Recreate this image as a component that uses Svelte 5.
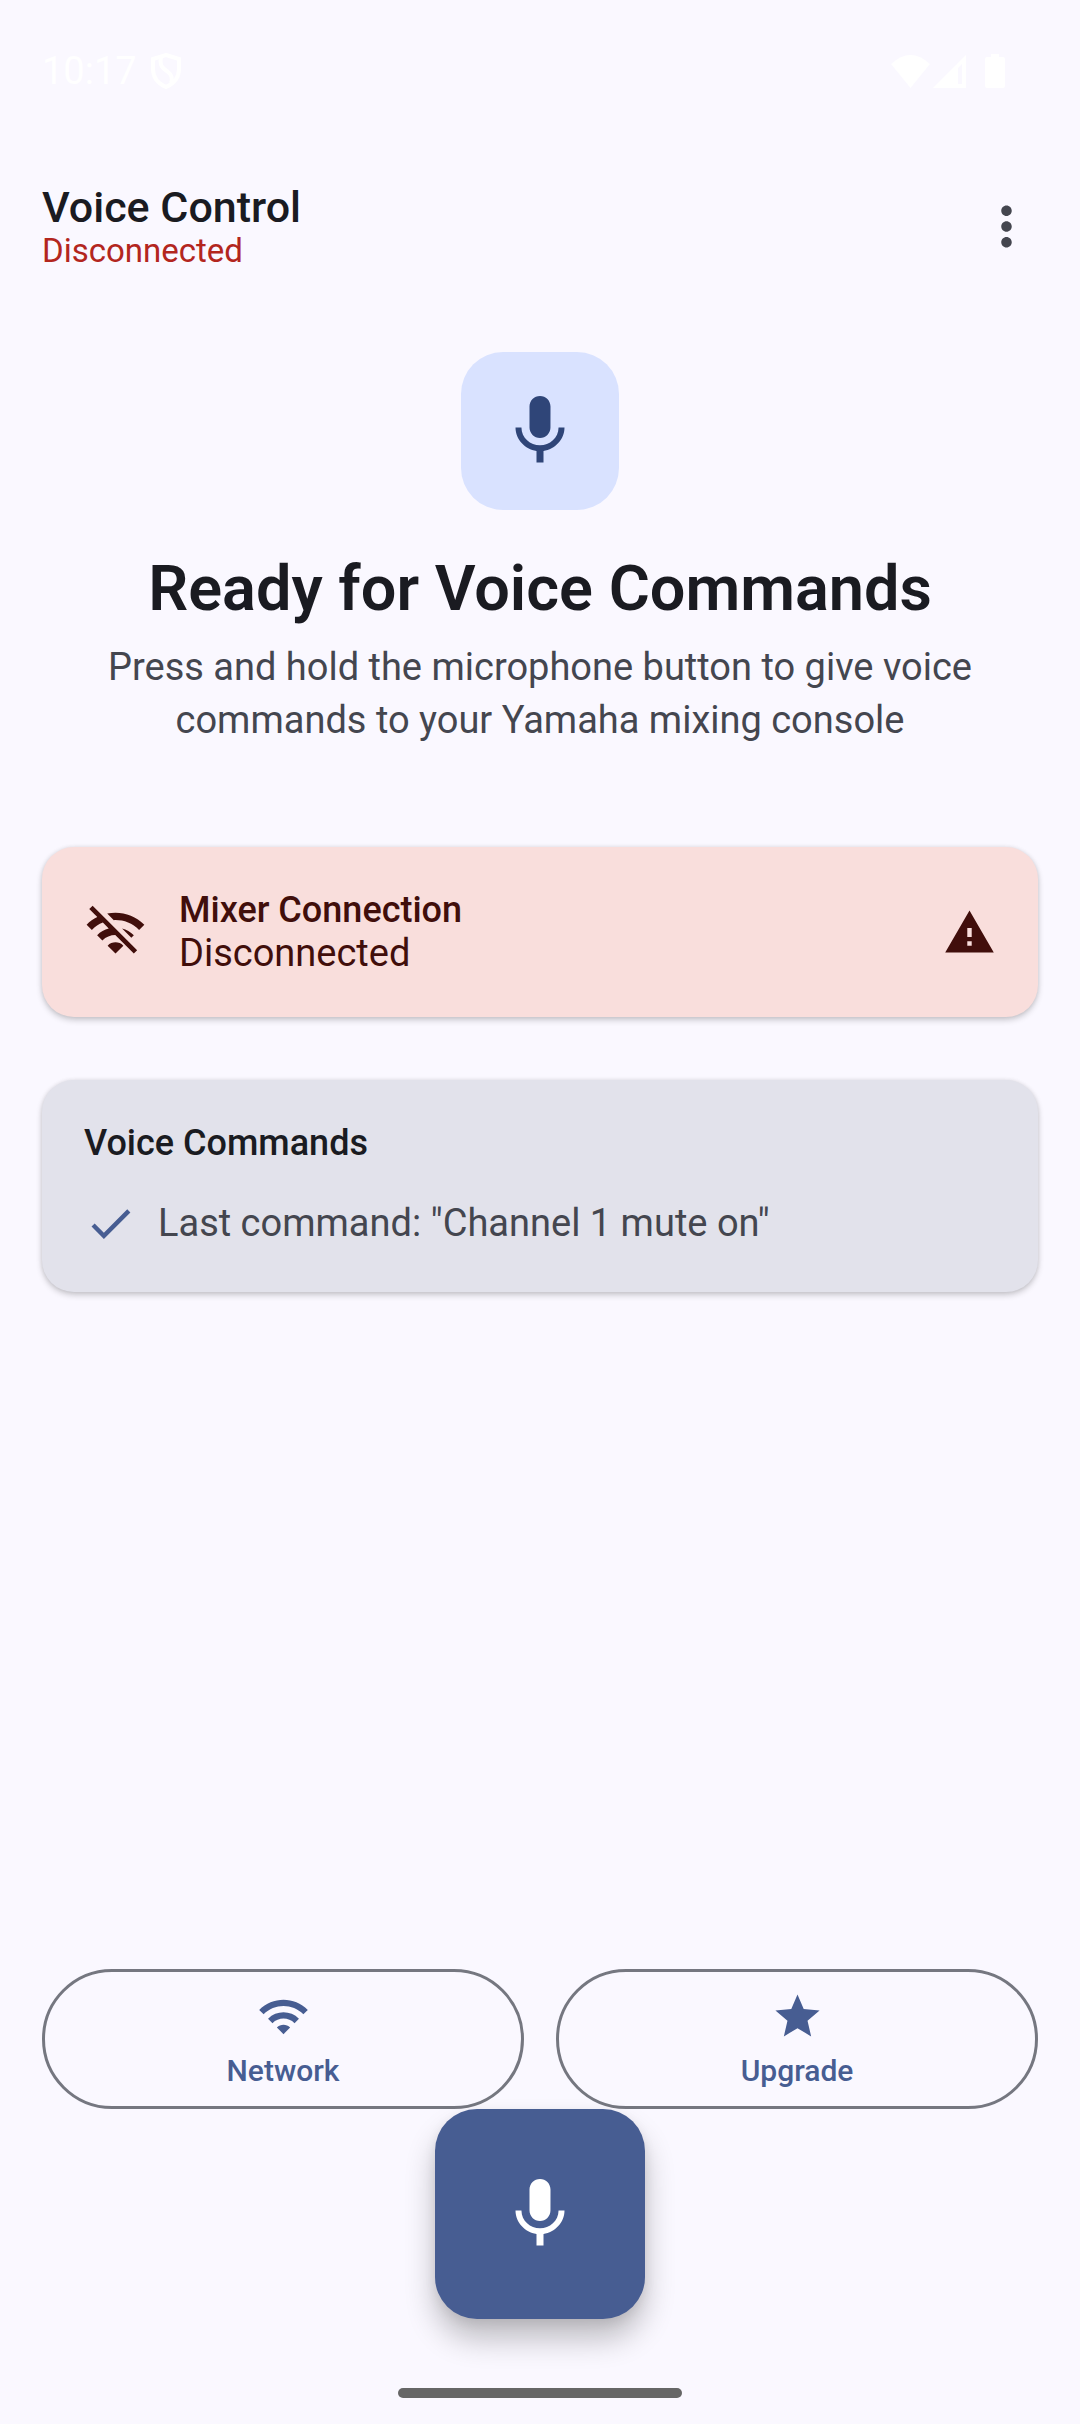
<script>
  const icons = {
    mic: 'M12 14c1.66 0 2.99-1.34 2.99-3L15 5c0-1.66-1.34-3-3-3S9 3.34 9 5v6c0 1.66 1.34 3 3 3zm5.3-3c0 3-2.54 5.1-5.3 5.1S6.7 14 6.7 11H5c0 3.41 2.72 6.23 6 6.72V21h2v-3.28c3.28-.48 6-3.3 6-6.72h-1.7z',
    more: 'M12 8c1.1 0 2-.9 2-2s-.9-2-2-2-2 .9-2 2 .9 2 2 2zm0 2c-1.1 0-2 .9-2 2s.9 2 2 2 2-.9 2-2-.9-2-2-2zm0 6c-1.1 0-2 .9-2 2s.9 2 2 2 2-.9 2-2-.9-2-2-2z',
    wifiOff:
      'M22.99 9C19.15 5.16 13.8 3.76 8.84 4.78l2.52 2.52c3.47-.17 6.99 1.05 9.63 3.7l2-2zm-4 4c-1.29-1.29-2.84-2.13-4.49-2.56l3.53 3.53.96-.97zM2 3.05L5.07 6.1C3.6 6.82 2.22 7.78 1 9l1.99 2c1.24-1.24 2.67-2.16 4.2-2.77l2.24 2.24C7.81 10.89 6.27 11.73 5 13v.01L6.99 15c1.36-1.36 3.14-2.04 4.92-2.06L18.98 20l1.27-1.26L3.29 1.79 2 3.05zM9 17l3 3 3-3c-1.65-1.66-4.34-1.66-6 0z',
    warning: 'M1 21h22L12 2 1 21zm12-3h-2v-2h2v2zm0-4h-2v-4h2v4z',
    check: 'M9 16.17L4.83 12l-1.42 1.41L9 19 21 7l-1.41-1.41z',
    wifi: 'M1 9l2 2c4.97-4.97 13.03-4.97 18 0l2-2C16.93 2.93 7.08 2.93 1 9zm8 8l3 3 3-3c-1.65-1.66-4.34-1.66-6 0zm-4-4l2 2c2.76-2.76 7.24-2.76 10 0l2-2C15.14 9.14 8.87 9.14 5 13z',
    star: 'M12 17.27L18.18 21l-1.64-7.03L22 9.24l-7.19-.61L12 2 9.19 8.63 2 9.24l5.46 4.73L5.82 21z',
  };

  const actions = [
    { label: 'Network', icon: icons.wifi },
    { label: 'Upgrade', icon: icons.star },
  ];

  let connection = $state('Disconnected');
  let lastCommand = $state('Channel 1 mute on');
</script>

{#snippet icon(path, size)}
  <svg class="icon {size}" viewBox="0 0 24 24" aria-hidden="true"><path d={path} /></svg>
{/snippet}

<div class="screen">
  <div class="status-bar">
    <div class="status-group">
      <time>10:17</time>
      <svg class="shield" viewBox="0 0 30 36" aria-hidden="true">
        <path d="M15 2 28 6V16C28 25 22 31 15 34C8 31 2 25 2 16V6Z" />
        <path d="M10 4C8 14 13 16 17 19C21 22 22 25 20 30" />
      </svg>
    </div>
    <div class="status-group right">
      <svg class="signal-wifi" viewBox="0 0 39 33" aria-hidden="true">
        <path d="M0 9Q19.500-9 39 9L19.500 33Z" />
      </svg>
      <svg class="signal-cell" viewBox="0 0 33 33" aria-hidden="true">
        <path fill-rule="evenodd" d="M0 33 33 0V33ZM25 13V29H29V9Z" />
      </svg>
      <svg class="battery" viewBox="0 0 20 34" aria-hidden="true">
        <path d="M6 0H14V3H18Q20 3 20 5V32Q20 34 18 34H2Q0 34 0 32V5Q0 3 2 3H6Z" />
      </svg>
    </div>
  </div>

  <header class="app-bar">
    <div>
      <h1>Voice Control</h1>
      <p class="app-state">{connection}</p>
    </div>
    <button class="menu" type="button" aria-label="More options">
      {@render icon(icons.more, 'medium')}
    </button>
  </header>

  <main>
    <section class="hero">
      <div class="hero-icon">{@render icon(icons.mic, 'large')}</div>
      <h2>Ready for Voice Commands</h2>
      <p>Press and hold the microphone button to give voice commands to your Yamaha mixing console</p>
    </section>

    <section class="card error">
      {@render icon(icons.wifiOff, 'medium')}
      <div class="card-text">
        <h3>Mixer Connection</h3>
        <p>{connection}</p>
      </div>
      {@render icon(icons.warning, 'small')}
    </section>

    <section class="card commands">
      <h3>Voice Commands</h3>
      <div class="last">
        {@render icon(icons.check, 'small')}
        <p>Last command: "{lastCommand}"</p>
      </div>
    </section>
  </main>

  <footer>
    <div class="actions">
      {#each actions as action}
        <button class="outlined" type="button">
          {@render icon(action.icon, 'small')}
          <span>{action.label}</span>
        </button>
      {/each}
    </div>
    <button class="fab" type="button" aria-label="Hold to speak">
      {@render icon(icons.mic, 'large')}
    </button>
    <div class="nav-handle"></div>
  </footer>
</div>

<style>
  :global(body) {
    background: #faf8ff;
  }

  .screen {
    display: flex;
    flex-direction: column;
    min-height: 100vh;
    box-sizing: border-box;
    background: #faf8ff;
    color: #1a1b21;
    font-family: Roboto, sans-serif;
    font-size: 38px;
    line-height: 43px;
  }

  h1,
  h2,
  h3,
  p {
    margin: 0;
  }

  h1,
  h3 {
    font-weight: 500;
  }

  h3 {
    font-size: 36px;
  }

  button {
    margin: 0;
    font-family: inherit;
    cursor: pointer;
  }

  .icon {
    display: block;
    flex: none;
    fill: currentColor;
  }

  .small {
    width: 53px;
    height: 53px;
  }

  .medium {
    width: 63px;
    height: 63px;
  }

  .large {
    width: 84px;
    height: 84px;
  }

  .status-bar {
    display: flex;
    align-items: center;
    justify-content: space-between;
    height: 142px;
    padding: 0 75px 0 42px;
    box-sizing: border-box;
    color: #fff;
  }

  .status-group {
    display: flex;
    align-items: center;
    gap: 14px;
  }

  .right {
    gap: 3px;
  }

  .status-group svg {
    fill: currentColor;
  }

  .status-group .shield {
    width: 30px;
    height: 36px;
    fill: none;
    stroke: currentColor;
    stroke-width: 4;
  }

  .signal-wifi {
    width: 39px;
    height: 33px;
  }

  .signal-cell {
    width: 33px;
    height: 33px;
  }

  .battery {
    width: 20px;
    height: 34px;
    margin-left: 16px;
  }

  .app-bar {
    display: flex;
    align-items: center;
    justify-content: space-between;
    height: 168px;
    padding: 0 11px 0 42px;
  }

  h1 {
    font-size: 43px;
    line-height: 49px;
  }

  .app-state {
    color: #b3261e;
    font-size: 33px;
    line-height: 37px;
  }

  .menu {
    display: grid;
    place-items: center;
    width: 126px;
    height: 126px;
    padding: 0;
    border: 0;
    border-radius: 50%;
    background: none;
    color: #44464f;
  }

  main {
    display: flex;
    flex: 1;
    flex-direction: column;
    padding: 42px 42px 0;
  }

  .hero {
    display: flex;
    flex-direction: column;
    align-items: center;
    padding: 0 21px;
    margin-bottom: 100px;
    text-align: center;
  }

  .hero-icon {
    display: grid;
    place-items: center;
    width: 158px;
    height: 158px;
    border-radius: 42px;
    background: #d9e2ff;
    color: #2f4578;
  }

  h2 {
    margin: 42px 0 15px;
    font-size: 63px;
    font-weight: 600;
    line-height: 74px;
  }

  .hero p {
    color: #44464f;
    line-height: 53px;
  }

  .card {
    padding: 42px;
    border-radius: 32px;
    box-shadow:
      0 3px 6px rgb(0 0 0 / 20%),
      0 0 4px rgb(0 0 0 / 8%);
  }

  .error {
    display: flex;
    align-items: center;
    margin-bottom: 63px;
    background: #f9dedc;
    color: #410e0b;
  }

  .card-text {
    flex: 1;
    padding: 0 32px;
  }

  .commands {
    background: #e2e2eb;
  }

  .last {
    display: flex;
    align-items: center;
    gap: 21px;
    margin-top: 32px;
    color: #44464f;
  }

  .last .icon {
    color: #475d92;
  }

  footer {
    display: flex;
    flex-direction: column;
    align-items: center;
    padding: 0 42px 26px;
  }

  .actions {
    display: flex;
    gap: 32px;
    width: 100%;
  }

  .outlined {
    display: flex;
    flex: 1;
    flex-direction: column;
    align-items: center;
    gap: 11px;
    padding: 18px;
    border: 3px solid #757780;
    border-radius: 70px;
    background: none;
    color: #475d92;
    font-size: 30px;
    font-weight: 500;
    line-height: 34px;
  }

  .fab {
    display: grid;
    place-items: center;
    width: 210px;
    height: 210px;
    padding: 0;
    border: 0;
    border-radius: 42px;
    background: #475d92;
    box-shadow:
      0 20px 30px rgb(0 0 0 / 24%),
      0 4px 12px rgb(0 0 0 / 8%);
    color: #fff;
  }

  .nav-handle {
    width: 284px;
    height: 10px;
    margin-top: 69px;
    border-radius: 5px;
    background: #666;
  }
</style>
